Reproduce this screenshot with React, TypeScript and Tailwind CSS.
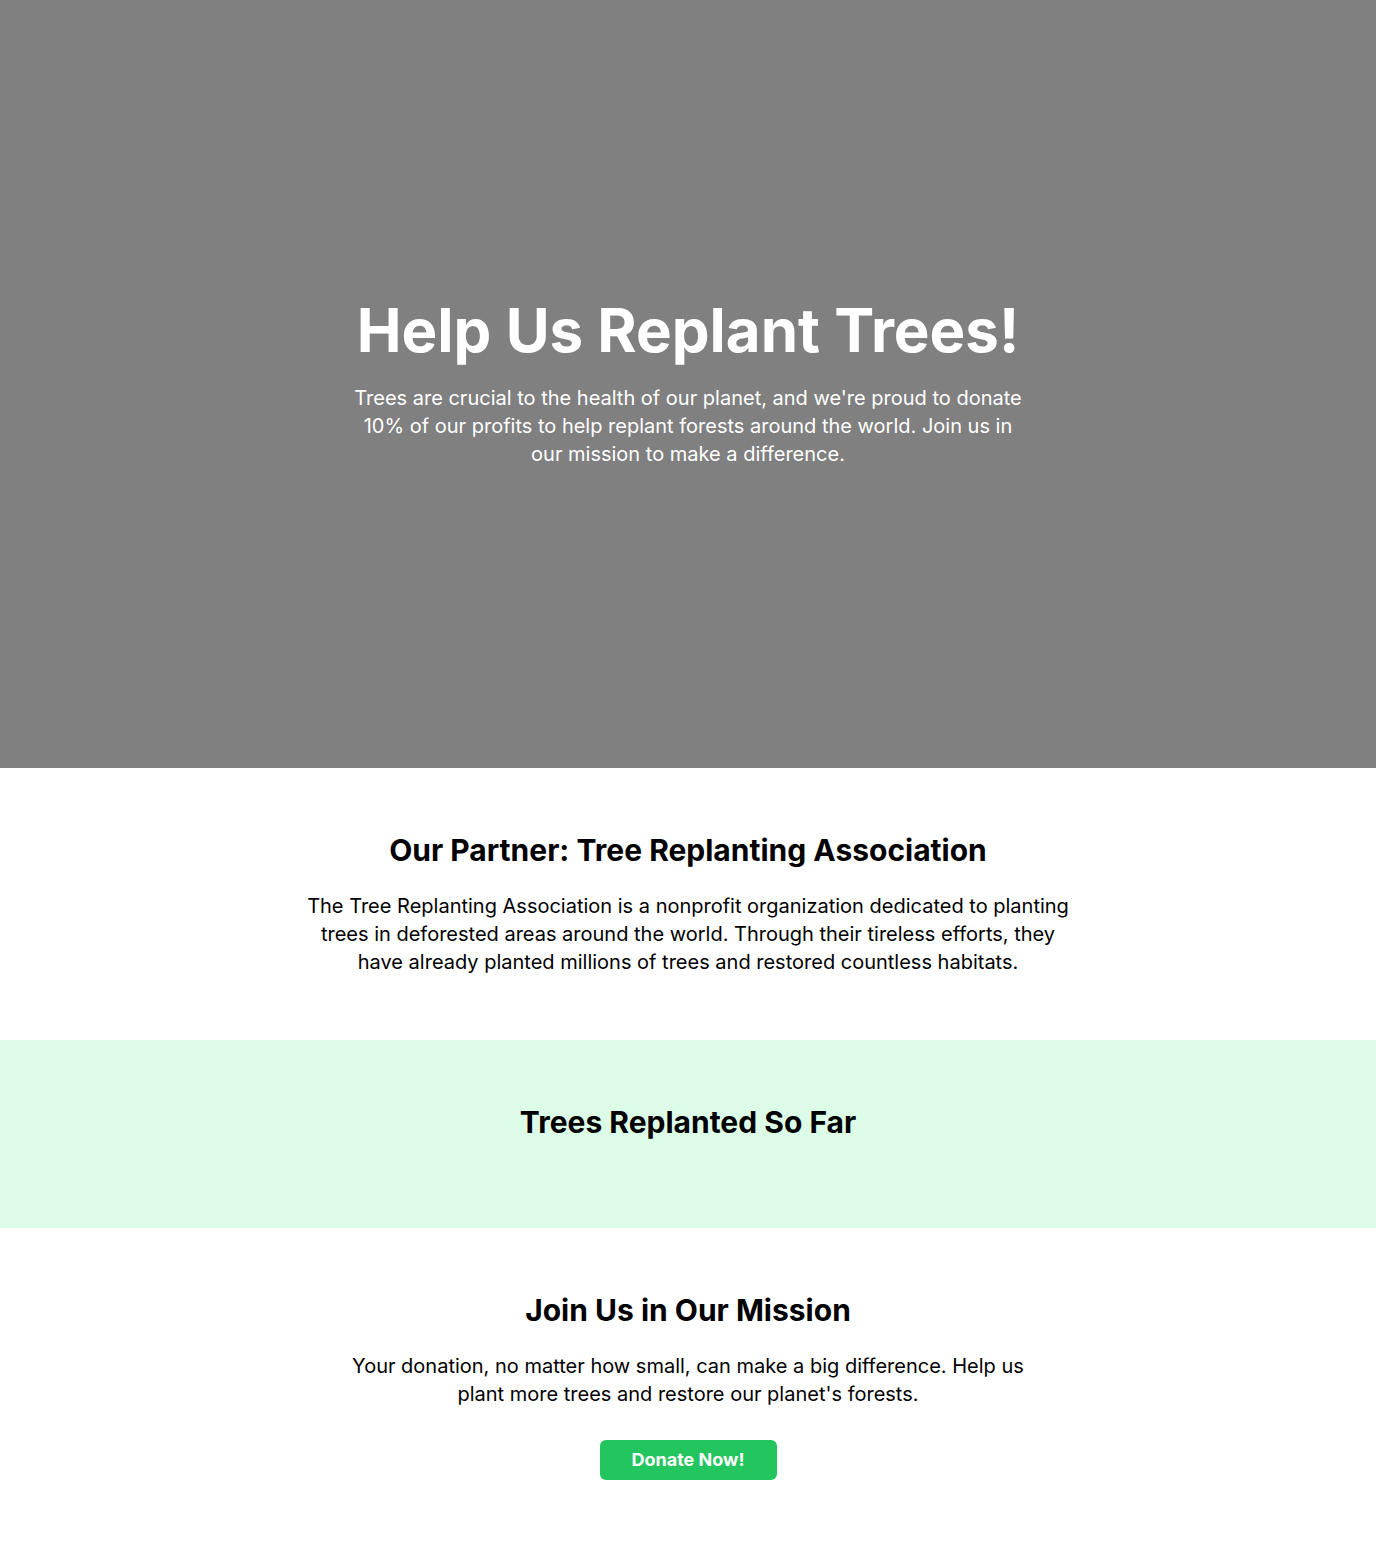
import React from 'react';

const App = () => {
  return (
    <div className="font-['Inter',sans-serif] text-black bg-white">
      {/* Hero */}
      <section className="h-[768px] bg-[#808080] flex items-center justify-center px-4">
        <div className="text-center max-w-2xl">
          <h1 className="text-6xl font-bold text-white mb-6">Help Us Replant Trees!</h1>
          <p className="text-xl text-white">
            Trees are crucial to the health of our planet, and we're proud to donate 10% of our profits to help
            replant forests around the world. Join us in our mission to make a difference.
          </p>
        </div>
      </section>

      {/* Partner */}
      <section className="py-16 px-4">
        <div className="max-w-3xl mx-auto text-center">
          <h2 className="text-3xl font-bold mb-6">Our Partner: Tree Replanting Association</h2>
          <p className="text-xl">
            The Tree Replanting Association is a nonprofit organization dedicated to planting trees in deforested
            areas around the world. Through their tireless efforts, they have already planted millions of trees and
            restored countless habitats.
          </p>
        </div>
      </section>

      {/* Counter */}
      <section className="py-16 px-4 bg-[#dcfce7]">
        <div className="max-w-3xl mx-auto text-center">
          <h2 className="text-3xl font-bold mb-6">Trees Replanted So Far</h2>
        </div>
      </section>

      {/* Call to action */}
      <section className="py-16 px-4">
        <div className="max-w-2xl mx-auto text-center">
          <h2 className="text-3xl font-bold mb-6">Join Us in Our Mission</h2>
          <p className="text-xl mb-8">
            Your donation, no matter how small, can make a big difference. Help us plant more trees and restore our
            planet's forests.
          </p>
          <button className="bg-[#22c55e] text-white text-lg font-bold px-8 py-1.5 rounded-md">Donate Now!</button>
        </div>
      </section>
    </div>
  );
};

export default App;
